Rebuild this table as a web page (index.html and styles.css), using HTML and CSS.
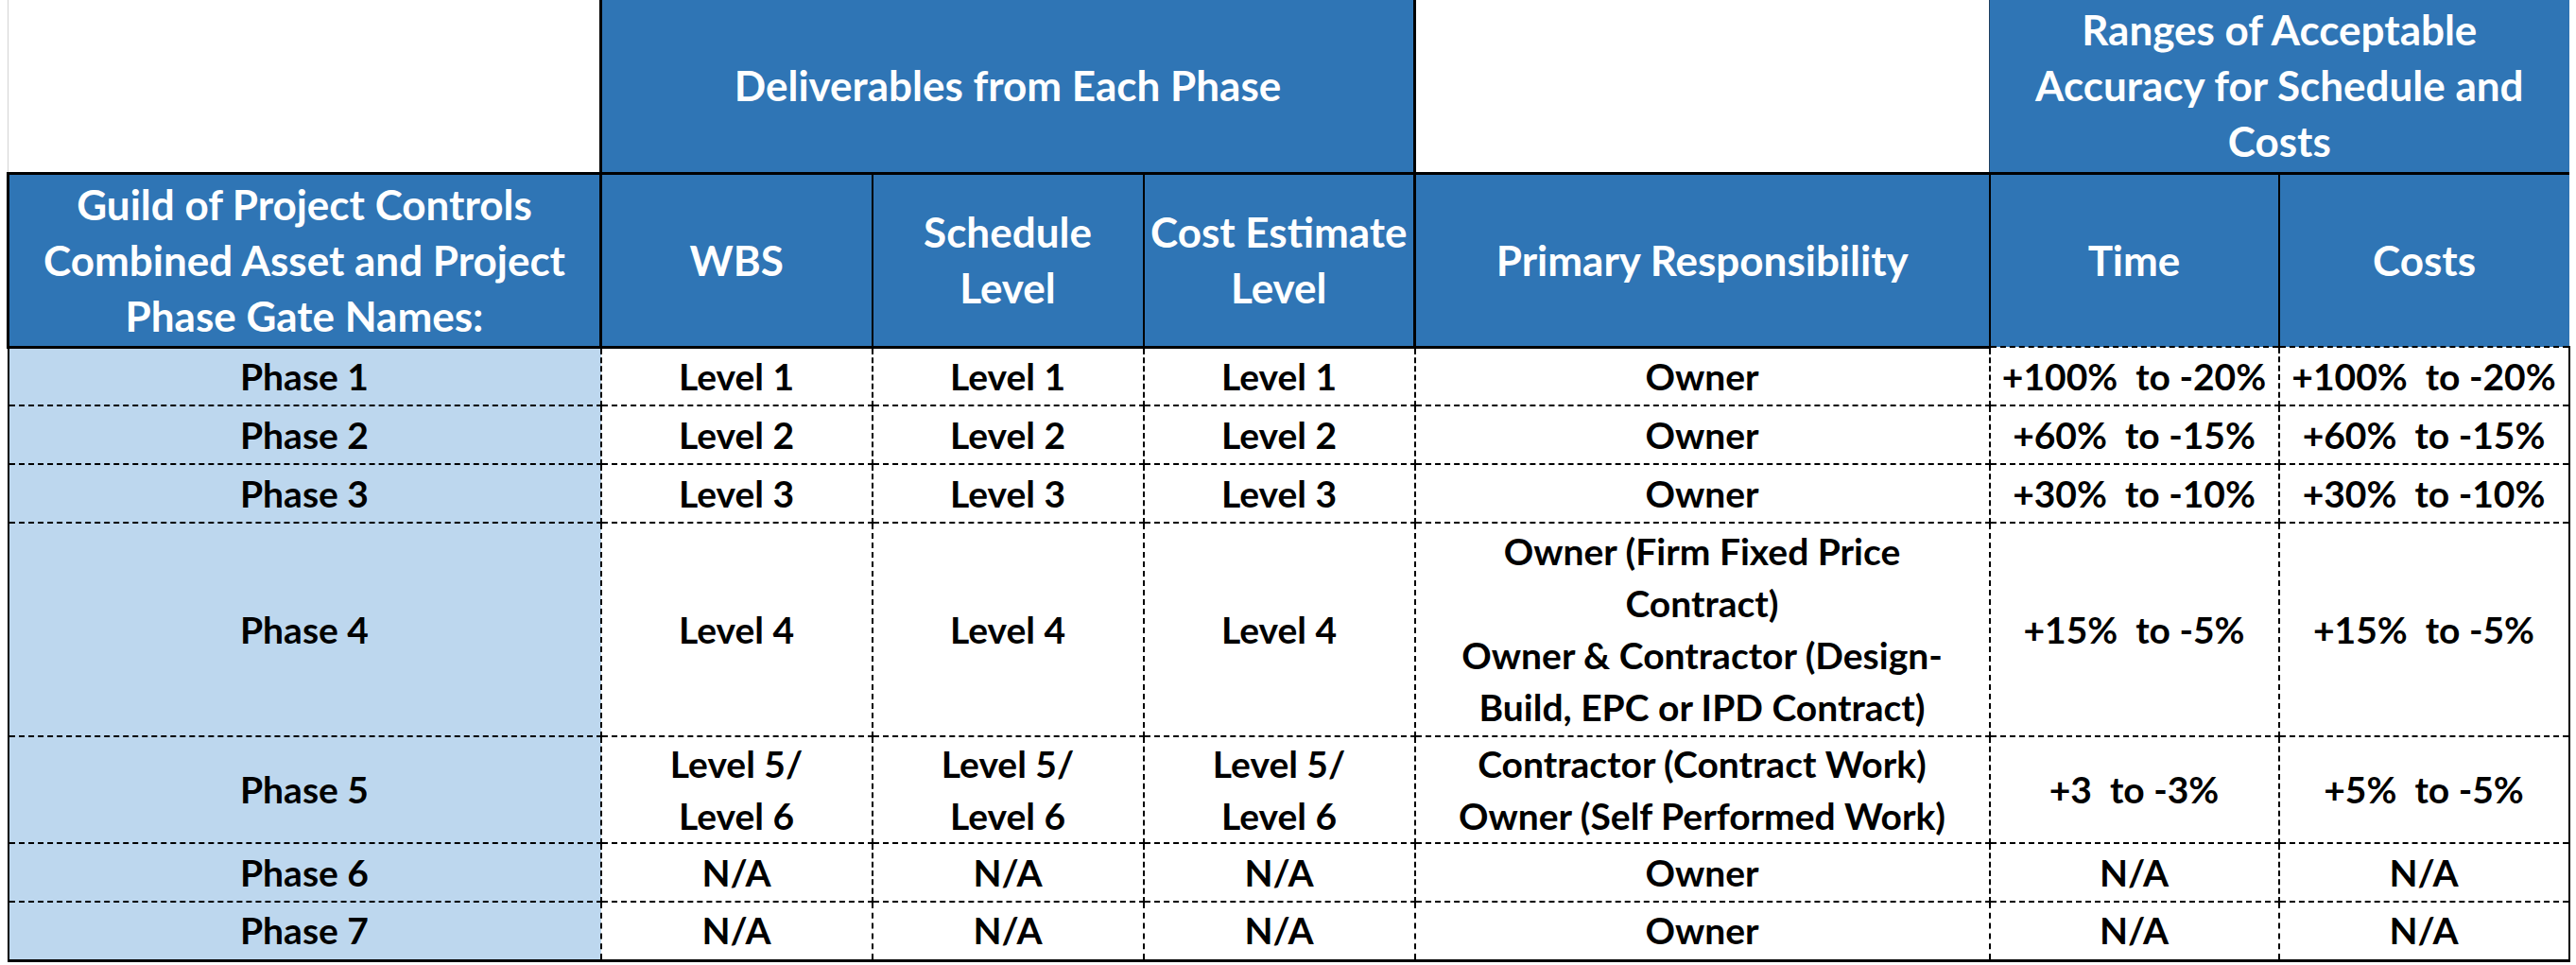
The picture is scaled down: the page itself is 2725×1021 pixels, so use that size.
FILE: index.html
```html
<!DOCTYPE html>
<html lang="en">
<head>
<meta charset="utf-8">
<title>Phase Gate Deliverables</title>
<link rel="stylesheet" href="styles.css">
</head>
<body>
<table class="grid">
  <colgroup>
    <col class="c-phase">
    <col class="c-lvl">
    <col class="c-lvl">
    <col class="c-lvl">
    <col class="c-resp">
    <col class="c-rng">
    <col class="c-rng2">
  </colgroup>
  <thead>
    <tr class="h-top">
      <th class="blank blank-left"></th>
      <th class="hd hd-group" colspan="3">Deliverables from Each Phase</th>
      <th class="blank blank-mid"></th>
      <th class="hd hd-ranges" colspan="2">Ranges of Acceptable<br>Accuracy for Schedule and<br>Costs</th>
    </tr>
    <tr class="h-sub">
      <th class="hd hd-phase">Guild of Project Controls<br>Combined Asset and Project<br>Phase Gate Names:</th>
      <th class="hd hd-wbs">WBS</th>
      <th class="hd hd-sched">Schedule<br>Level</th>
      <th class="hd hd-cost">Cost Estimate<br>Level</th>
      <th class="hd hd-resp">Primary Responsibility</th>
      <th class="hd hd-time">Time</th>
      <th class="hd hd-costs">Costs</th>
    </tr>
  </thead>
  <tbody>
    <tr class="r-std">
      <td class="ph">Phase 1</td>
      <td>Level 1</td><td>Level 1</td><td>Level 1</td>
      <td>Owner</td>
      <td class="rng">+100%  to -20%</td><td class="rng last">+100%  to -20%</td>
    </tr>
    <tr class="r-std">
      <td class="ph">Phase 2</td>
      <td>Level 2</td><td>Level 2</td><td>Level 2</td>
      <td>Owner</td>
      <td class="rng">+60%  to -15%</td><td class="rng last">+60%  to -15%</td>
    </tr>
    <tr class="r-std">
      <td class="ph">Phase 3</td>
      <td>Level 3</td><td>Level 3</td><td>Level 3</td>
      <td>Owner</td>
      <td class="rng">+30%  to -10%</td><td class="rng last">+30%  to -10%</td>
    </tr>
    <tr class="r-tall">
      <td class="ph">Phase 4</td>
      <td>Level 4</td><td>Level 4</td><td>Level 4</td>
      <td>Owner (Firm Fixed Price<br>Contract)<br>Owner &amp; Contractor (Design-<br>Build, EPC or IPD Contract)</td>
      <td class="rng">+15%  to -5%</td><td class="rng last">+15%  to -5%</td>
    </tr>
    <tr class="r-mid">
      <td class="ph">Phase 5</td>
      <td>Level 5/<br>Level 6</td><td>Level 5/<br>Level 6</td><td>Level 5/<br>Level 6</td>
      <td>Contractor (Contract Work)<br>Owner (Self Performed Work)</td>
      <td class="rng">+3  to -3%</td><td class="rng last">+5%  to -5%</td>
    </tr>
    <tr class="r-std">
      <td class="ph">Phase 6</td>
      <td>N/A</td><td>N/A</td><td>N/A</td>
      <td>Owner</td>
      <td class="rng">N/A</td><td class="rng last">N/A</td>
    </tr>
    <tr class="r-std r-end">
      <td class="ph">Phase 7</td>
      <td>N/A</td><td>N/A</td><td>N/A</td>
      <td>Owner</td>
      <td class="rng">N/A</td><td class="rng last">N/A</td>
    </tr>
  </tbody>
</table>
</body>
</html>
```

FILE: styles.css
```css
html, body {
  margin: 0;
  padding: 0;
  background: #ffffff;
}

body {
  padding-left: 7px;
  font-family: "Lato", "Liberation Sans", sans-serif;
  font-weight: 700;
  color: #000000;
}

.grid {
  border-collapse: collapse;
  table-layout: fixed;
  width: 2709px;
}

.c-phase { width: 627px; }
.c-lvl { width: 287px; }
.c-resp { width: 608px; }
.c-rng { width: 306px; }
.c-rng2 { width: 307px; }

.grid th,
.grid td {
  padding: 0;
  text-align: center;
  vertical-align: middle;
  font-weight: 700;
  white-space: nowrap;
}

.grid th {
  font-size: 44px;
  line-height: 59px;
}

.grid td {
  font-size: 39px;
  line-height: 55px;
}

/* header rows */
.h-top { height: 183px; }
.h-sub { height: 184px; }

.hd {
  background: #2f75b5;
  color: #ffffff;
}

.blank {
  background: #ffffff;
  border-bottom: 3px solid #000;
}

.blank-left {
  border-left: 1px solid #d4d4d4;
}

.blank-mid {
  border-right: 1px solid #1f3f5f;
}

.hd-group {
  border-left: 3px solid #000;
  border-right: 3px solid #000;
  border-bottom: 3px solid #000;
}

.hd-ranges {
  border-bottom: 3px solid #000;
}

.hd-phase {
  border-left: 3px solid #000;
  border-right: 3px solid #000;
  border-bottom: 3px solid #000;
}

.hd-wbs,
.hd-sched {
  border-right: 2px solid #000;
  border-bottom: 3px solid #000;
}

.hd-cost {
  border-right: 3px solid #000;
  border-bottom: 3px solid #000;
}

.hd-resp {
  border-right: 2px solid #000;
  border-bottom: 3px solid #000;
}

.hd-time {
  border-right: 2px solid #000;
}

/* body rows */
.r-std { height: 62px; }
.r-tall { height: 226px; }
.r-mid { height: 113px; }

.grid td {
  border: 2px dashed #000;
  background: #ffffff;
}

.grid td.ph {
  background: #bdd7ee;
  border-left: 2px solid #000;
}

.grid td.rng {
  white-space: pre;
}

.grid td.last {
  border-right: 2px solid #000;
}

.r-end td {
  border-bottom: 3px solid #000;
}
```
